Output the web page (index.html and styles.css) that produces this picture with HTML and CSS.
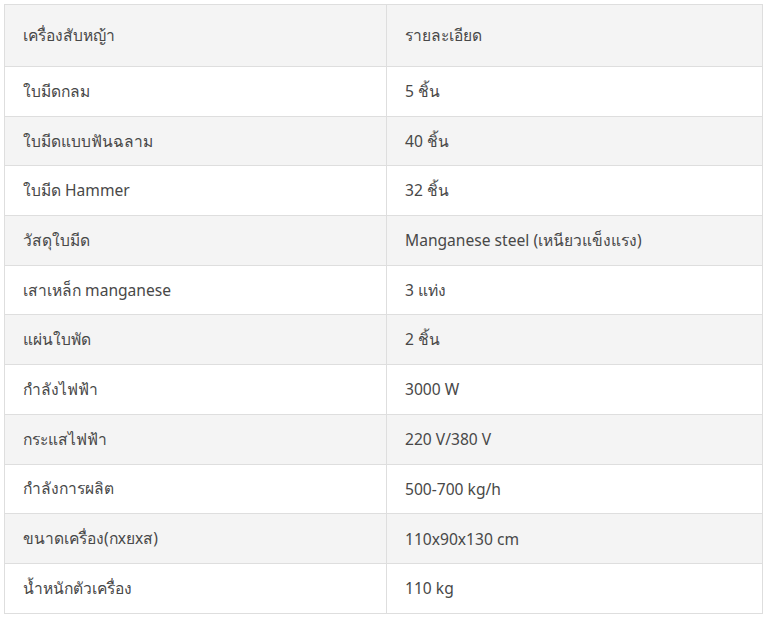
FILE: index.html
```html
<!DOCTYPE html>
<html lang="th">
<head>
<meta charset="utf-8">
<title>เครื่องสับหญ้า</title>
<link rel="stylesheet" href="styles.css">
</head>
<body>
<table class="spec">
  <thead>
    <tr><th class="col-name">เครื่องสับหญ้า</th><th>รายละเอียด</th></tr>
  </thead>
  <tbody>
    <tr><td>ใบมีดกลม</td><td>5 ชิ้น</td></tr>
    <tr><td>ใบมีดแบบฟันฉลาม</td><td>40 ชิ้น</td></tr>
    <tr><td>ใบมีด Hammer</td><td>32 ชิ้น</td></tr>
    <tr><td>วัสดุใบมีด</td><td>Manganese steel (เหนียวแข็งแรง)</td></tr>
    <tr><td>เสาเหล็ก manganese</td><td>3 แท่ง</td></tr>
    <tr><td>แผ่นใบพัด</td><td>2 ชิ้น</td></tr>
    <tr><td>กำลังไฟฟ้า</td><td>3000 W</td></tr>
    <tr><td>กระแสไฟฟ้า</td><td>220 V/380 V</td></tr>
    <tr><td>กำลังการผลิต</td><td>500-700 kg/h</td></tr>
    <tr><td>ขนาดเครื่อง(กxยxส)</td><td>110x90x130 cm</td></tr>
    <tr><td>น้ำหนักตัวเครื่อง</td><td>110 kg</td></tr>
  </tbody>
</table>
</body>
</html>
```
FILE: styles.css
```css
html, body {
  margin: 0;
  padding: 0;
  background: #ffffff;
}
body {
  padding: 4px 5px 4px 4px;
  font-family: "Noto Sans", "Liberation Sans", sans-serif;
  font-size: 15.6px;
  color: #484848;
}
.spec {
  width: 759px;
  border-collapse: collapse;
  border: 1px solid #dedede;
}
.spec th,
.spec td {
  border: 1px solid #dedede;
  text-align: left;
  font-weight: normal;
  padding: 0 18px;
  vertical-align: middle;
}
.spec th {
  height: 61px;
  background: #f4f4f4;
}
.spec td {
  height: 48.7px;
}
.spec .col-name {
  width: 345px;
}
.spec tbody tr:nth-child(even) td {
  background: #f4f4f4;
}
```
